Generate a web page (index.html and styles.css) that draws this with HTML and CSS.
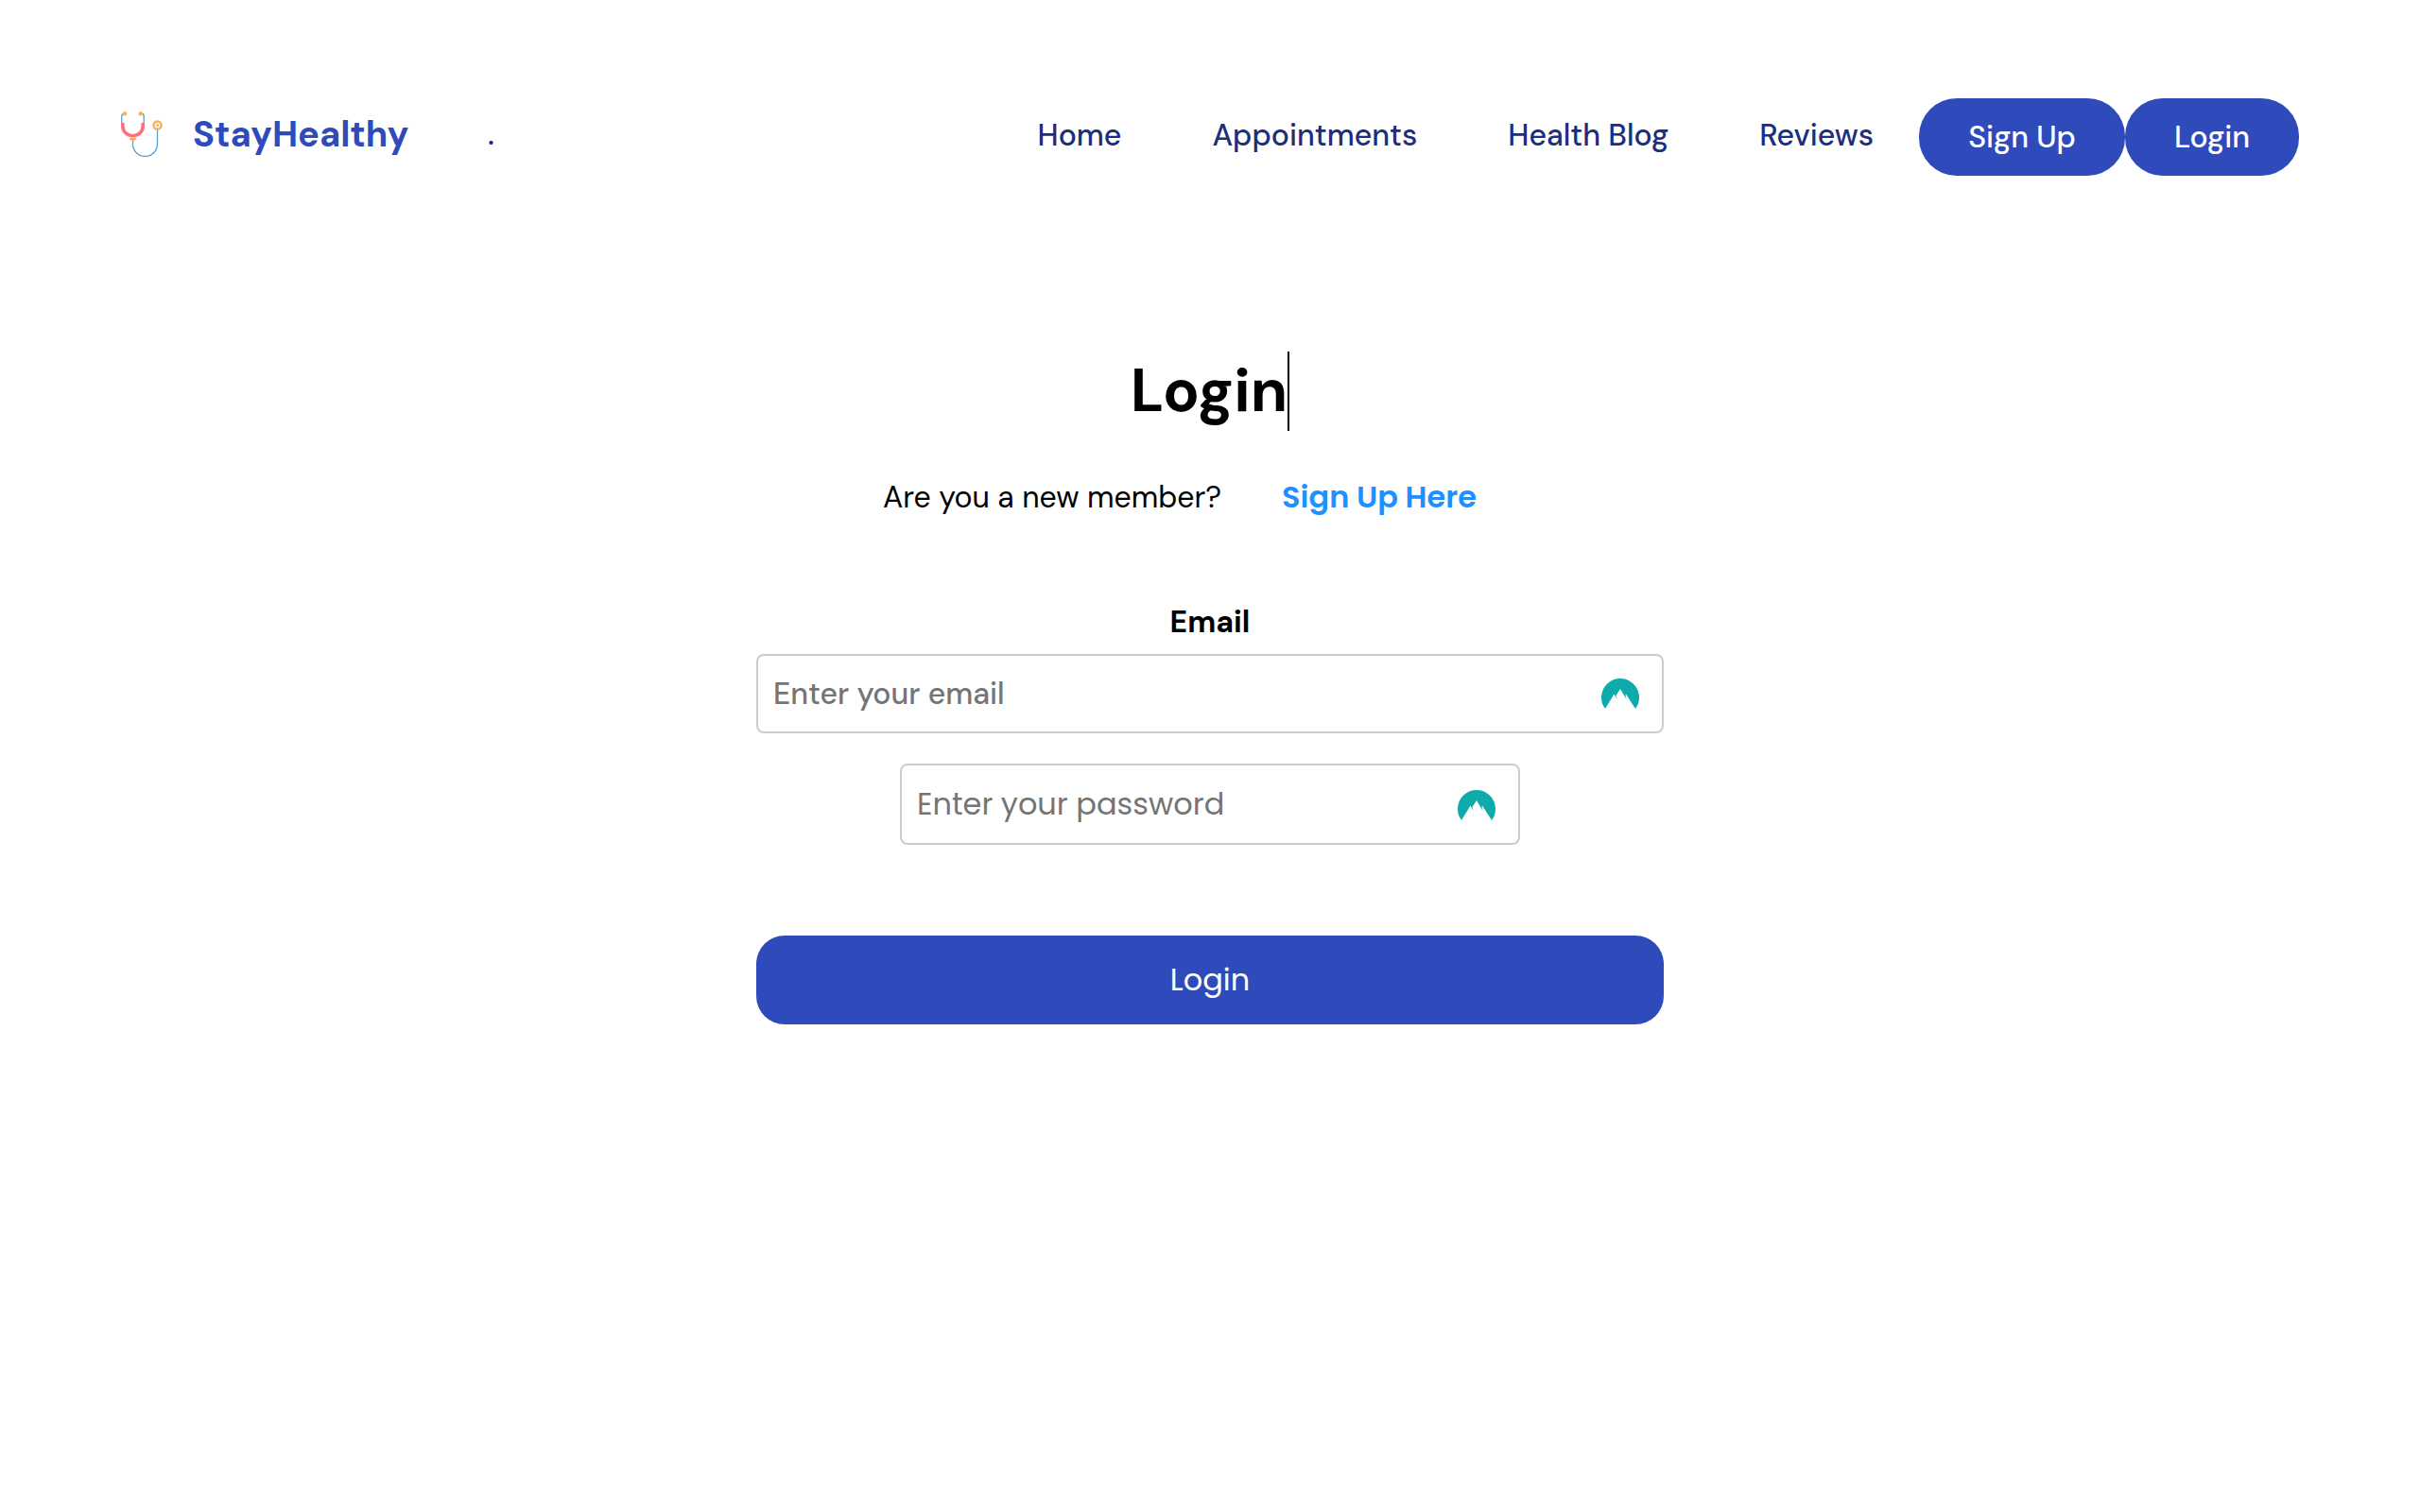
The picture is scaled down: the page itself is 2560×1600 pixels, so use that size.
FILE: index.html
```html
<!DOCTYPE html>
<html lang="en">
<head>
  <meta charset="utf-8">
  <meta name="viewport" content="width=device-width, initial-scale=1">
  <title>StayHealthy - Login</title>
  <link rel="stylesheet" href="styles.css">
</head>
<body>
  <svg class="sprite" aria-hidden="true">
    <symbol id="peak" viewBox="0 0 40 32">
      <path fill="#0eabab" d="M4 32A20 20 0 1 1 36 32L26 16.500L25.500 18L26.500 22L20 11L15.500 18L16.500 22L13.500 16.500Z"/>
    </symbol>
  </svg>
  <header class="navbar">
    <a class="brand" href="#">
      <svg class="brand-icon" viewBox="0 0 44 48" aria-hidden="true">
        <g fill="none" stroke="#5b9fc9" stroke-width="1.300">
          <path d="M4 2Q.8 2 .8 5V16M21 2Q24.200 2 24.200 5V16M12.500 29V34.500A13 13 0 0 0 38.500 34.500V18"/>
        </g>
        <path d="M8.500 28H16.500Q15.500 31 12.500 31T8.500 28Z" fill="#fdb04f"/>
        <path d="M1.800 12V15.500A10.700 10.200 0 0 0 23.200 15.500V12" fill="none" stroke="#ff707b" stroke-width="3.600"/>
        <circle cx="4" cy="2.200" r="2.200" fill="#fdb04f"/>
        <circle cx="20.800" cy="2.200" r="2.200" fill="#fdb04f"/>
        <circle cx="38.500" cy="14.500" r="5.300" fill="#fdb04f"/>
        <circle cx="38.500" cy="14.500" r="2.200" fill="#fdb04f" stroke="#fff" stroke-width="1.300"/>
      </svg>
      <span class="brand-name">StayHealthy</span>
      <span class="brand-dot">.</span>
    </a>
    <nav class="nav">
      <a class="nav-link" href="#">Home</a>
      <a class="nav-link" href="#">Appointments</a>
      <a class="nav-link" href="#">Health Blog</a>
      <a class="nav-link" href="#">Reviews</a>
      <button class="pill pill-wide" type="button">Sign Up</button>
      <button class="pill" type="button">Login</button>
    </nav>
  </header>
  <main class="login">
    <h1 class="title">Login</h1>
    <p class="member"><span>Are you a new member?</span><a class="signup" href="#">Sign Up Here</a></p>
    <form class="form">
      <label class="label" for="email">Email</label>
      <div class="field">
        <input class="input input-email" id="email" type="email" placeholder="Enter your email">
        <svg class="peak" aria-hidden="true"><use href="#peak"/></svg>
      </div>
      <div class="field field-narrow">
        <input class="input input-password" type="password" aria-label="Password" placeholder="Enter your password">
        <svg class="peak" aria-hidden="true"><use href="#peak"/></svg>
      </div>
      <button class="submit" type="submit">Login</button>
    </form>
  </main>
</body>
</html>
```
FILE: styles.css
```css
* {
  box-sizing: border-box;
}

body {
  margin: 0;
  background: #fff;
  color: #000;
  font-family: "DM Sans", Inter, sans-serif;
  font-size: 32px;
  line-height: 48px;
}

a {
  text-decoration: none;
}

button,
input {
  font: inherit;
}

.sprite {
  position: absolute;
  width: 0;
  height: 0;
}

.navbar {
  display: flex;
  align-items: center;
  justify-content: space-between;
  padding: 104px 128px 0;
}

.brand {
  display: flex;
  align-items: center;
  padding-bottom: 6px;
  color: #2f4bbb;
}

.brand-icon {
  width: 44px;
  height: 48px;
}

.brand-name {
  width: 312px;
  margin-left: 32px;
  font-size: 38px;
  font-weight: 700;
}

.brand-dot {
  color: #1b2f7d;
  font-weight: 500;
}

.nav {
  display: flex;
  align-items: center;
}

.nav-link {
  padding: 0 48px 4px;
  color: #1b2f7d;
  font-weight: 500;
}

.pill {
  width: 184px;
  height: 82px;
  padding: 0;
  border: 0;
  border-radius: 40px;
  background: #2f4bbb;
  color: #fff;
  font-weight: 500;
}

.pill-wide {
  width: 218px;
}

.login {
  display: flex;
  flex-direction: column;
  align-items: center;
  width: 100%;
  max-width: 960px;
  margin: 0 auto;
  padding-top: 186px;
}

.title {
  margin: 0;
  border-right: 2px solid #000;
  font-size: 64px;
  font-weight: 700;
  line-height: 84px;
}

.member {
  display: flex;
  gap: 64px;
  margin: 46px 64px 0 0;
}

.signup {
  color: #1e90ff;
  font-family: Poppins, "DM Sans", sans-serif;
  font-weight: 600;
}

.form {
  display: flex;
  flex-direction: column;
  align-items: center;
  width: 100%;
}

.label {
  margin-top: 84px;
  font-weight: 700;
}

.field {
  position: relative;
  width: 100%;
  margin-top: 10px;
}

.field-narrow {
  max-width: 656px;
  margin-top: 32px;
}

.input {
  display: block;
  width: 100%;
  padding: 0 80px 0 16px;
  border: 2px solid #ccc;
  border-radius: 8px;
  background: #fff;
}

.input-email {
  height: 84px;
  font-weight: 500;
}

.input-password {
  height: 86px;
  font-family: Poppins, "DM Sans", sans-serif;
}

.input::placeholder {
  color: #757575;
  opacity: 1;
}

.peak {
  position: absolute;
  right: 26px;
  bottom: 26px;
  width: 40px;
  height: 32px;
}

.submit {
  width: 100%;
  height: 94px;
  margin-top: 96px;
  border: 0;
  border-radius: 30px;
  background: #2f4bbb;
  color: #fff;
  font-family: Poppins, "DM Sans", sans-serif;
}
```
